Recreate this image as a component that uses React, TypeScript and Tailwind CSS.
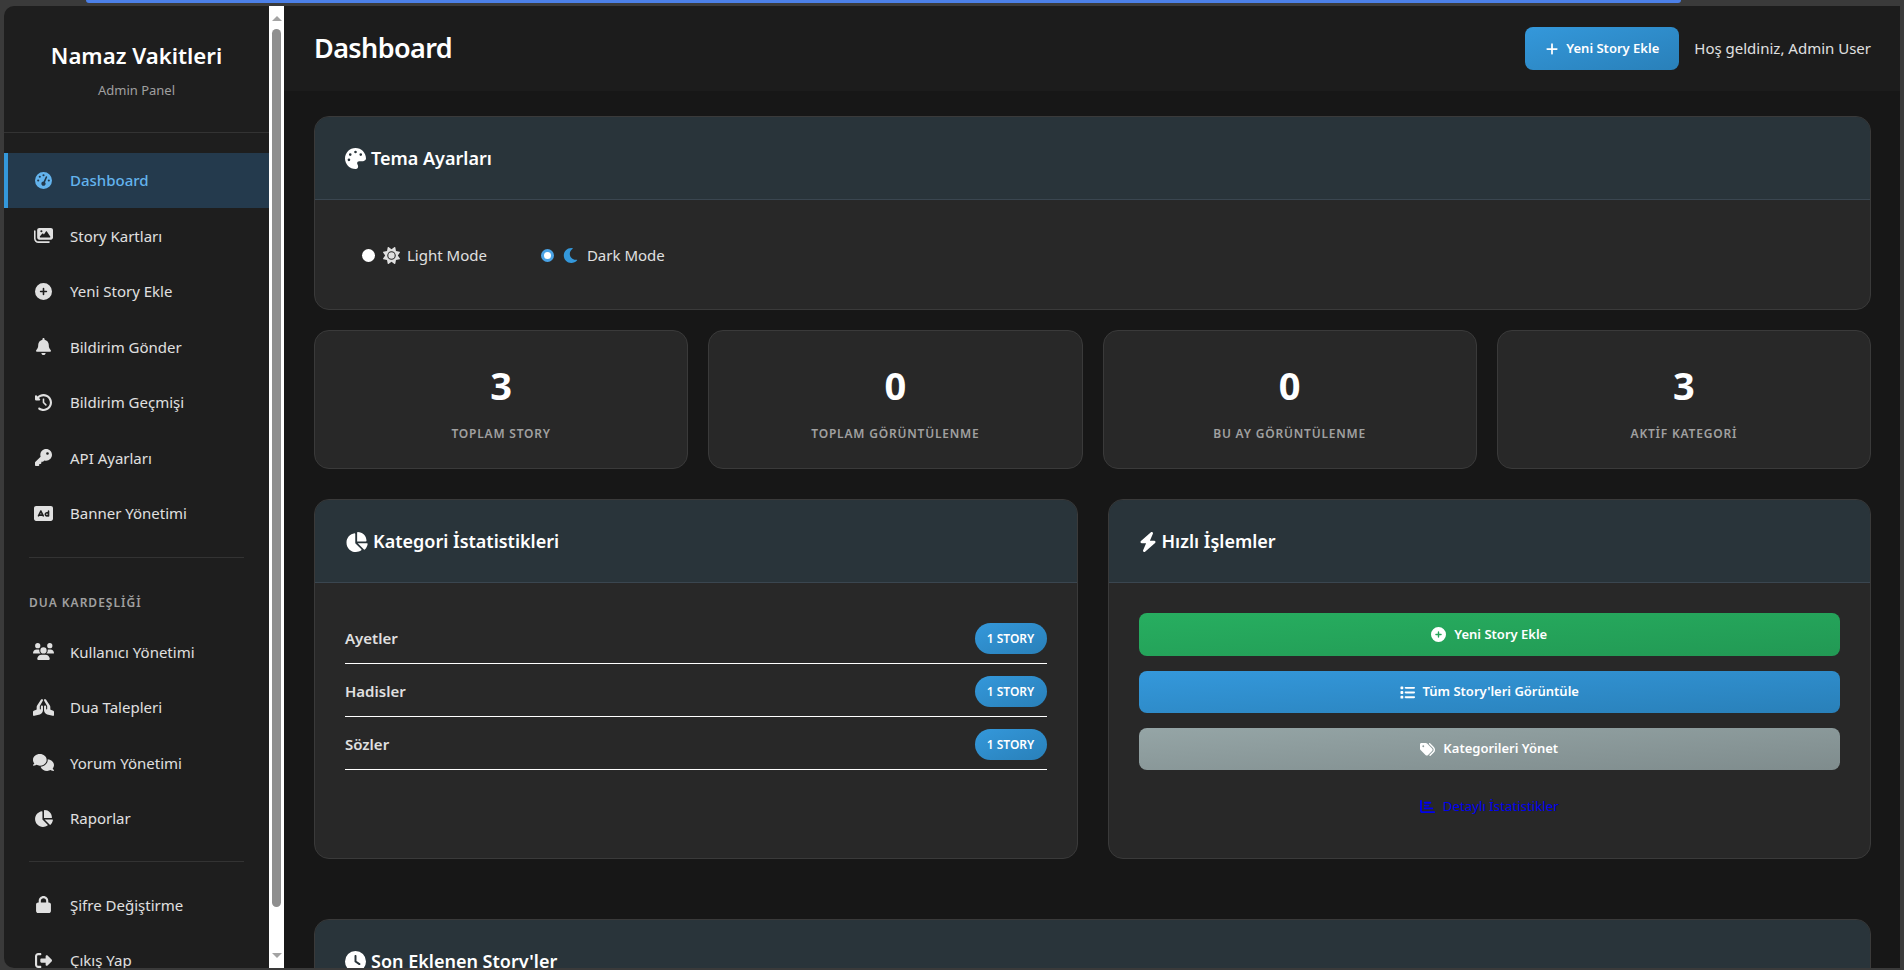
import React from 'react';
import {
  FaGaugeHigh, FaImages, FaCirclePlus, FaBell, FaClockRotateLeft, FaKey, FaRectangleAd, FaUsers, FaHandsPraying,
  FaComments, FaChartPie, FaLock, FaRightFromBracket, FaPalette, FaSun, FaBolt, FaList, FaTags,
  FaChartBar, FaClock, FaPlus,
} from 'react-icons/fa6';
import { FaMoon } from 'react-icons/fa';
import type { IconType } from 'react-icons';

function NavItem({ icon: Icon, label, active, iconClass }: { icon: IconType; label: string; active?: boolean; iconClass?: string }) {
  return (
    <div
      className={
        active
          ? 'flex h-[55px] items-center border-l-4 border-[#3498db] bg-[#243a4d] pl-[25px] text-[15px] font-medium text-[#63b3ed]'
          : 'flex h-[55.5px] items-center pl-[29px] text-[15px] text-[#e0e0e0]'
      }
    >
      <span className="flex w-[20px] justify-center">
        <Icon className={`h-[17px] shrink-0 ${iconClass ?? 'w-[17px]'}`} />
      </span>
      <span className="ml-[17px]">{label}</span>
    </div>
  );
}

function Sidebar() {
  return (
    <aside className="flex h-full w-[265px] shrink-0 flex-col overflow-hidden rounded-tl-[10px] rounded-bl-[10px] bg-[#1e1e1e]">
      <div className="h-[127px] shrink-0 border-b border-[#333] pt-[35px] text-center">
        <h1 className="text-[22.2px] leading-[30px] font-semibold text-white">Namaz Vakitleri</h1>
        <p className="mt-[10px] text-[13px] leading-[18px] text-[#a0a0a0]">Admin Panel</p>
      </div>
      <nav className="pt-[20px]">
        <NavItem icon={FaGaugeHigh} label="Dashboard" active />
        <NavItem icon={FaImages} label="Story Kartları" iconClass="w-[19px]" />
        <NavItem icon={FaCirclePlus} label="Yeni Story Ekle" />
        <NavItem icon={FaBell} label="Bildirim Gönder" />
        <NavItem icon={FaClockRotateLeft} label="Bildirim Geçmişi" />
        <NavItem icon={FaKey} label="API Ayarları" />
        <NavItem icon={FaRectangleAd} label="Banner Yönetimi" iconClass="w-[19px]" />
        <div className="mx-[25px] mt-[16px] border-t border-[#333]" />
        <div className="mt-[37px] mb-[13px] ml-[25px] text-[12px] leading-[16px] font-semibold tracking-[1px] text-[#a0a0a0]">
          DUA KARDEŞLİĞİ
        </div>
        <NavItem icon={FaUsers} label="Kullanıcı Yönetimi" iconClass="w-[21px]" />
        <NavItem icon={FaHandsPraying} label="Dua Talepleri" iconClass="w-[21px]" />
        <NavItem icon={FaComments} label="Yorum Yönetimi" iconClass="w-[21px]" />
        <NavItem icon={FaChartPie} label="Raporlar" iconClass="w-[19px]" />
        <div className="mx-[25px] mt-[15px] mb-[15px] border-t border-[#333]" />
        <NavItem icon={FaLock} label="Şifre Değiştirme" />
        <NavItem icon={FaRightFromBracket} label="Çıkış Yap" />
      </nav>
    </aside>
  );
}

function ScrollBar() {
  return (
    <div className="flex h-full w-[15px] shrink-0 flex-col items-center bg-white">
      <div className="mt-[10px] h-0 w-0 border-x-[5px] border-b-[5px] border-x-transparent border-b-[#a3a3a3]" />
      <div className="mt-[8px] h-[878px] w-[9px] rounded-full bg-[#8f8f8f]" />
      <div className="mt-auto mb-[10px] h-0 w-0 border-x-[5px] border-t-[5px] border-x-transparent border-t-[#a3a3a3]" />
    </div>
  );
}

function Card({ icon: Icon, title, className, iconClass, children }: { icon: IconType; title: string; className?: string; iconClass: string; children?: React.ReactNode }) {
  return (
    <section className={`overflow-hidden rounded-[15px] border border-[#3a3a3a] bg-[#282828] ${className ?? ''}`}>
      <div className="flex h-[83px] items-center gap-[5px] border-b border-[#3a4650] bg-[#29343a] pt-[1px] pl-[30px] text-[18px] font-semibold text-white">
        <Icon className={`shrink-0 ${iconClass}`} />
        <span>{title}</span>
      </div>
      {children}
    </section>
  );
}

function Stat({ value, label }: { value: string; label: string }) {
  return (
    <div className="flex h-[139px] flex-col items-center rounded-[15px] border border-[#3a3a3a] bg-[#282828] pt-[30px]">
      <div className="text-[38px] leading-[48px] font-bold text-white">{value}</div>
      <div className="mt-[17px] text-[12px] leading-[16px] font-semibold tracking-[0.8px] text-[#a0a0a0]">{label}</div>
    </div>
  );
}

function CategoryRow({ name }: { name: string }) {
  return (
    <div className="flex h-[53px] items-center justify-between border-b border-white pt-[3px]">
      <span className="text-[15px] font-semibold text-[#e0e0e0]">{name}</span>
      <span className="flex h-[31px] w-[72px] items-center justify-center rounded-full bg-gradient-to-br from-[#3498db] to-[#2980b9] text-[12px] font-semibold text-white">
        1 STORY
      </span>
    </div>
  );
}

function ActionButton({ icon: Icon, label, className }: { icon: IconType; label: string; className: string }) {
  return (
    <div className={`flex items-center justify-center gap-[8px] rounded-[8px] text-[13px] font-semibold text-white ${className}`}>
      <Icon className="h-[15px] w-[15px] shrink-0" />
      <span>{label}</span>
    </div>
  );
}

export default function App() {
  return (
    <div className="flex h-[970px] w-[1904px] flex-col overflow-hidden bg-[#3a3a3a] font-['Noto_Sans',sans-serif]">
      <div className="ml-[86px] h-[3px] w-[1595px] shrink-0 rounded-b-[6px] bg-[#4c80e8]" />
      <div className="flex min-h-0 flex-1 pt-[3px] pb-[2px] pl-[4px] pr-[4px]">
        <Sidebar />
        <ScrollBar />
        <main className="min-w-0 flex-1 overflow-hidden bg-[#171717]">
          <header className="flex h-[85px] items-center justify-between bg-[#1c1c1c] pr-[29px] pl-[30px]">
            <h2 className="text-[27px] font-semibold tracking-[-0.6px] text-white">Dashboard</h2>
            <div className="flex items-center gap-[15px]">
              <div className="flex h-[43px] w-[154px] items-center justify-center gap-[7px] rounded-[8px] bg-gradient-to-br from-[#3498db] to-[#2980b9] text-[13px] font-semibold text-white">
                <FaPlus className="h-[14px] w-[14px] shrink-0" />
                <span>Yeni Story Ekle</span>
              </div>
              <span className="text-[15px] text-[#e0e0e0]">Hoş geldiniz, Admin User</span>
            </div>
          </header>
          <div className="flex flex-col pt-[25px] pr-[29px] pl-[30px]">
            <Card icon={FaPalette} title="Tema Ayarları" iconClass="h-[21px] w-[21px]" className="h-[194px]">
              <div className="flex h-[110px] items-center pl-[47px] text-[15px] text-[#e0e0e0]">
                <span className="h-[13px] w-[13px] rounded-full bg-white" />
                <FaSun className="ml-[8px] h-[17px] w-[17px]" />
                <span className="ml-[7px]">Light Mode</span>
                <span className="ml-[54px] h-[13px] w-[13px] rounded-full border-[3px] border-[#4aa3e6] bg-white" />
                <FaMoon className="ml-[9px] h-[15px] w-[15px] text-[#3498db]" />
                <span className="ml-[9px]">Dark Mode</span>
              </div>
            </Card>
            <div className="mt-[20px] grid grid-cols-4 gap-[20px]">
              <Stat value="3" label="TOPLAM STORY" />
              <Stat value="0" label="TOPLAM GÖRÜNTÜLENME" />
              <Stat value="0" label="BU AY GÖRÜNTÜLENME" />
              <Stat value="3" label="AKTİF KATEGORİ" />
            </div>
            <div className="mt-[30px] grid grid-cols-2 gap-[30px]">
              <Card icon={FaChartPie} title="Kategori İstatistikleri" iconClass="h-[20px] w-[23px]" className="h-[360px]">
                <div className="px-[30px] pt-[28px]">
                  <CategoryRow name="Ayetler" />
                  <CategoryRow name="Hadisler" />
                  <CategoryRow name="Sözler" />
                </div>
              </Card>
              <Card icon={FaBolt} title="Hızlı İşlemler" iconClass="h-[20px] w-[18px]" className="h-[360px]">
                <div className="flex flex-col gap-[15px] px-[30px] pt-[30px]">
                  <ActionButton icon={FaCirclePlus} label="Yeni Story Ekle" className="h-[43px] bg-gradient-to-br from-[#27ae60] to-[#229954]" />
                  <ActionButton icon={FaList} label="Tüm Story'leri Görüntüle" className="h-[42px] bg-gradient-to-br from-[#3498db] to-[#2980b9]" />
                  <ActionButton icon={FaTags} label="Kategorileri Yönet" className="h-[42px] bg-gradient-to-br from-[#95a5a6] to-[#7f8c8d]" />
                  <div className="mt-[12px] flex items-center justify-center gap-[8px] text-[13.3px] text-[#0000ee]">
                    <FaChartBar className="h-[15px] w-[15px] shrink-0" />
                    <span>Detaylı İstatistikler</span>
                  </div>
                </div>
              </Card>
            </div>
            <Card icon={FaClock} title="Son Eklenen Story'ler" iconClass="h-[21px] w-[21px]" className="mt-[60px] h-[200px]" />
          </div>
        </main>
      </div>
    </div>
  );
}
